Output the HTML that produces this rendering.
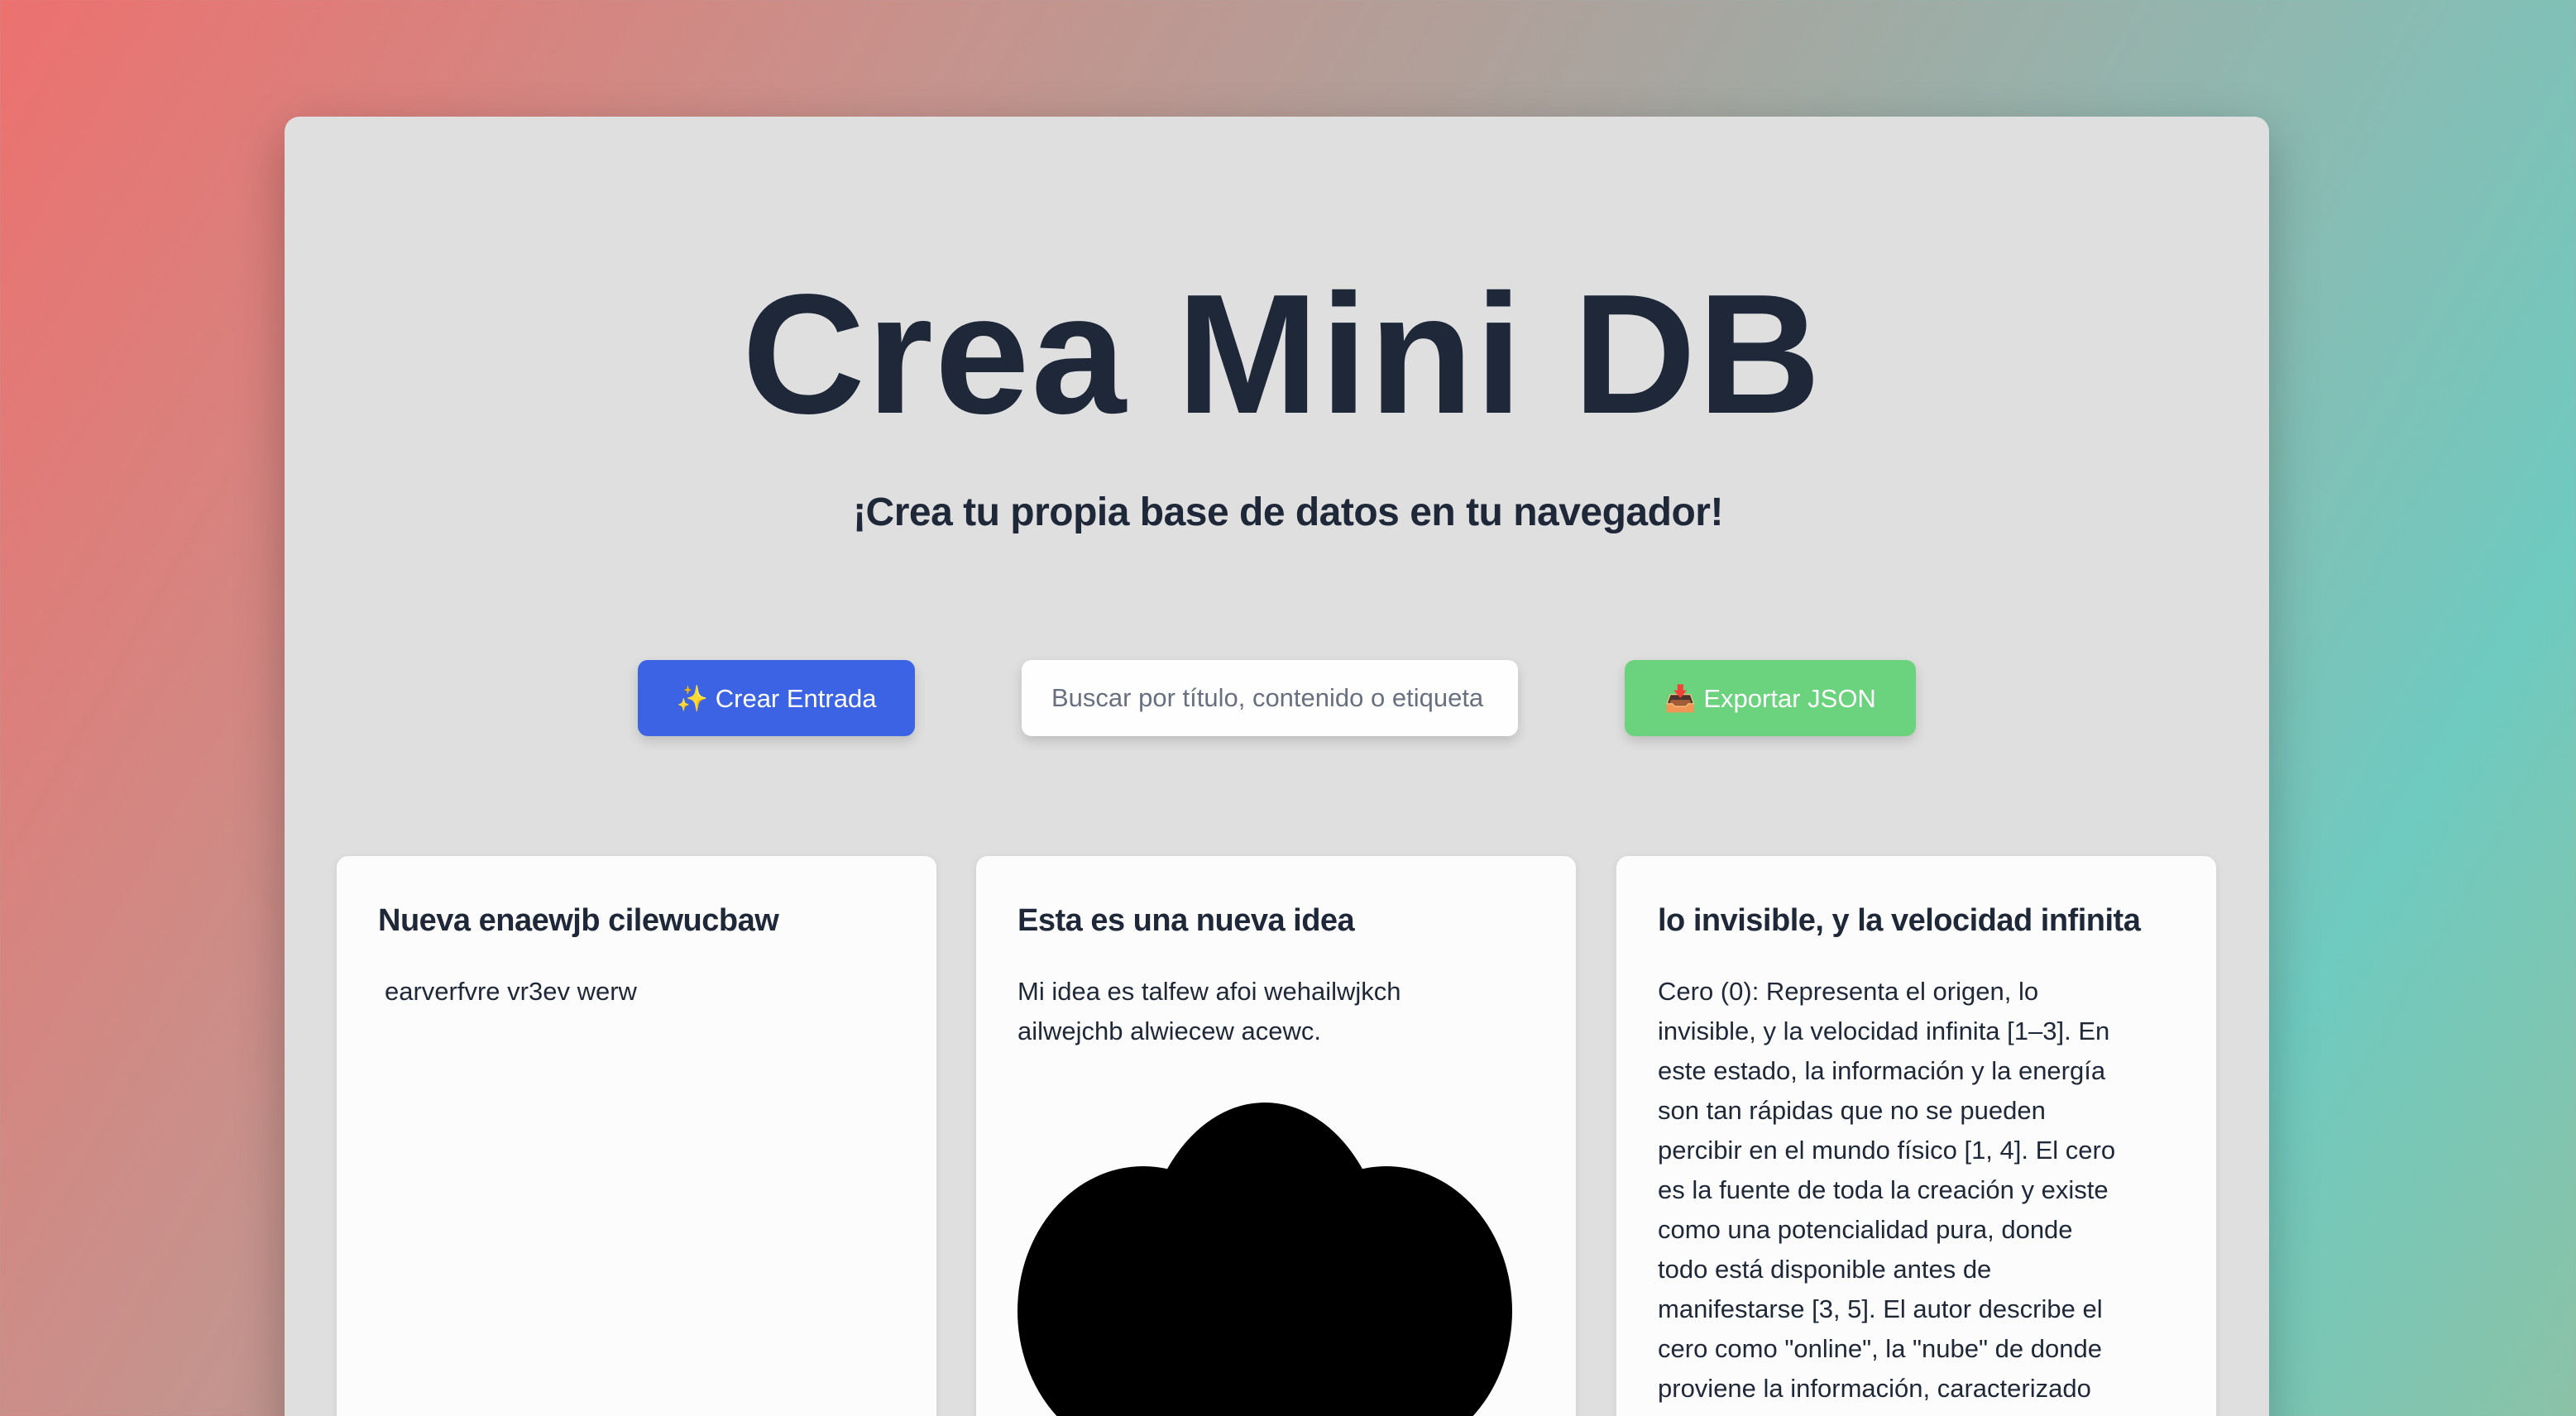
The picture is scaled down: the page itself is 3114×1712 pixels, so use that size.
<!DOCTYPE html>
<html><head><meta charset="utf-8"><style>
*{margin:0;padding:0;box-sizing:border-box}
html,body{width:3114px;height:1712px;overflow:hidden}
body{background:linear-gradient(120deg,#ec716f 0%,#c7928c 28%,#a8a59f 50%,#8fb8b0 68%,#6fcabf 85%,#8bc2a7 100%);font-family:"Liberation Sans",sans-serif;position:relative;color:#1f2937}
.box{position:absolute;left:344px;top:141px;width:2399px;height:1700px;background:#dfdfdf;border-radius:18px;box-shadow:0 20px 60px rgba(0,0,0,.25)}
h1{position:absolute;left:0;width:3100px;top:325px;text-align:center;font-size:206px;font-weight:700;color:#1e2839;letter-spacing:2px;line-height:1}
.sub{position:absolute;left:0;width:3114px;top:592px;text-align:center;font-size:48px;font-weight:700;color:#1e2839;letter-spacing:-0.5px}
.btn{position:absolute;top:798px;height:92px;border-radius:12px;font-size:31px;display:flex;align-items:center;justify-content:center;box-shadow:0 6px 14px rgba(0,0,0,.15)}
.card{position:absolute;top:1035px;width:725px;height:700px;background:#fcfcfc;border-radius:14px;padding:0 50px;box-shadow:0 2px 10px rgba(0,0,0,.08)}
.card h3{position:absolute;left:50px;top:59px;font-size:38px;font-weight:700;line-height:1;color:#1e2839;letter-spacing:-0.5px;white-space:nowrap}
.card p{position:absolute;left:50px;top:140px;font-size:31px;line-height:48px;color:#1e2839;white-space:nowrap}
</style></head><body>
<div class="box"></div>
<h1>Crea Mini DB</h1>
<div class="sub">¡Crea tu propia base de datos en tu navegador!</div>
<div class="btn" style="left:771px;width:335px;background:#3b63e3;color:#fff">✨ Crear Entrada</div>
<div class="btn" style="left:1235px;width:600px;background:#fefefe;color:#687080;justify-content:flex-start;padding-left:36px;overflow:hidden;white-space:nowrap">Buscar por título, contenido o etiqueta</div>
<div class="btn" style="left:1964px;width:352px;background:#6bd37e;color:#fff">📥 Exportar JSON</div>
<div class="card" style="left:407px"><h3>Nueva enaewjb cilewucbaw</h3><p style="left:58px">earverfvre vr3ev werw</p></div>
<div class="card" style="left:1180px">
<svg style="position:absolute;left:0;top:0" width="725" height="700" viewBox="1180 1035 725 700"><g fill="#000"><ellipse cx="1529" cy="1543" rx="150" ry="210"/><ellipse cx="1382" cy="1585" rx="152" ry="175"/><ellipse cx="1676" cy="1585" rx="152" ry="175"/><ellipse cx="1529" cy="1860" rx="290" ry="200"/><rect x="1380" y="1560" width="298" height="200"/></g></svg>
<h3>Esta es una nueva idea</h3><p>Mi idea es talfew afoi wehailwjkch<br>ailwejchb alwiecew acewc.</p></div>
<div class="card" style="left:1954px"><h3>lo invisible, y la velocidad infinita</h3><p>Cero (0): Representa el origen, lo<br>invisible, y la velocidad infinita [1–3]. En<br>este estado, la información y la energía<br>son tan rápidas que no se pueden<br>percibir en el mundo físico [1, 4]. El cero<br>es la fuente de toda la creación y existe<br>como una potencialidad pura, donde<br>todo está disponible antes de<br>manifestarse [3, 5]. El autor describe el<br>cero como "online", la "nube" de donde<br>proviene la información, caracterizado</p></div>
</body></html>
